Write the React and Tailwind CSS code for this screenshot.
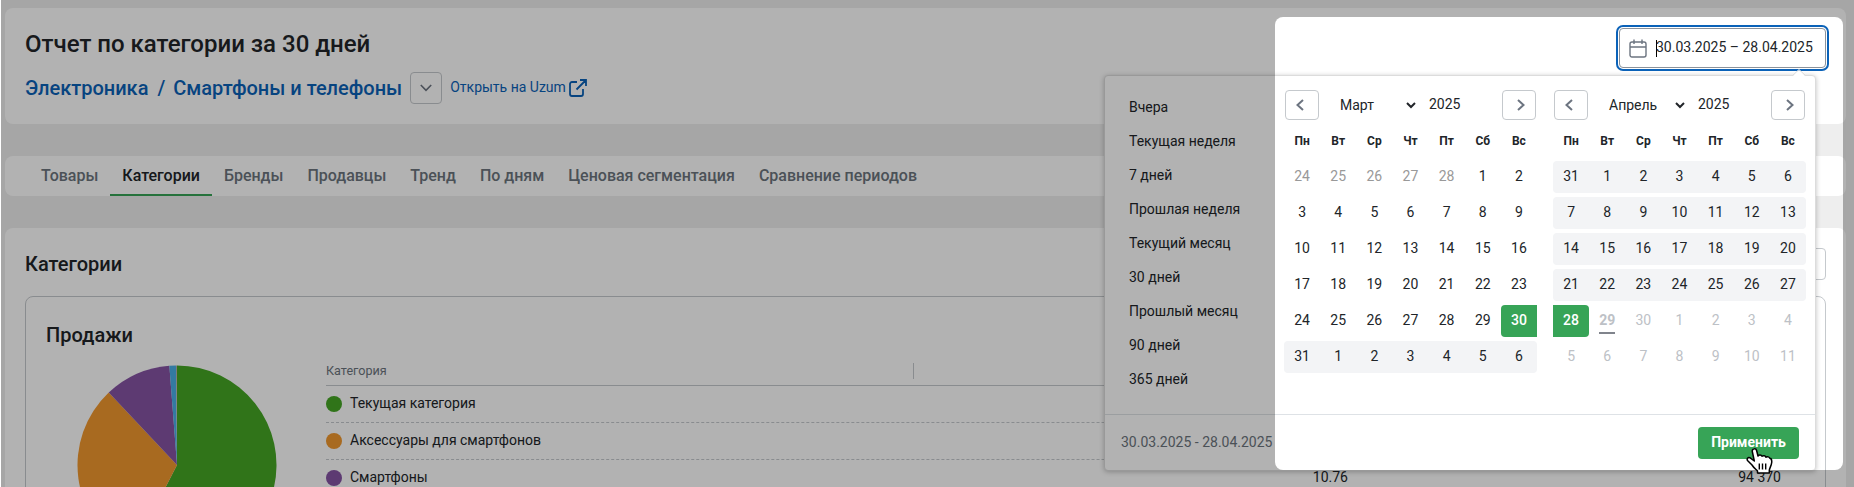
const tabs = [
  'Товары',
  'Категории',
  'Бренды',
  'Продавцы',
  'Тренд',
  'По дням',
  'Ценовая сегментация',
  'Сравнение периодов',
];

const presets = [
  'Вчера',
  'Текущая неделя',
  '7 дней',
  'Прошлая неделя',
  'Текущий месяц',
  '30 дней',
  'Прошлый месяц',
  '90 дней',
  '365 дней',
];

const weekdays = ['Пн', 'Вт', 'Ср', 'Чт', 'Пт', 'Сб', 'Вс'];

// state: '' - regular, out - other month, start / end of selection, today, off - disabled
const march = [
  { days: [24, 25, 26, 27, 28, 1, 2], states: ['out', 'out', 'out', 'out', 'out', '', ''] },
  { days: [3, 4, 5, 6, 7, 8, 9], states: [] },
  { days: [10, 11, 12, 13, 14, 15, 16], states: [] },
  { days: [17, 18, 19, 20, 21, 22, 23], states: [] },
  { days: [24, 25, 26, 27, 28, 29, 30], states: ['', '', '', '', '', '', 'start'] },
  { days: [31, 1, 2, 3, 4, 5, 6], states: [], range: true },
];

const april = [
  { days: [31, 1, 2, 3, 4, 5, 6], states: [], range: true },
  { days: [7, 8, 9, 10, 11, 12, 13], states: [], range: true },
  { days: [14, 15, 16, 17, 18, 19, 20], states: [], range: true },
  { days: [21, 22, 23, 24, 25, 26, 27], states: [], range: true },
  { days: [28, 29, 30, 1, 2, 3, 4], states: ['end', 'today', 'off', 'off', 'off', 'off', 'off'] },
  { days: [5, 6, 7, 8, 9, 10, 11], states: ['off', 'off', 'off', 'off', 'off', 'off', 'off'] },
];

const dayClass = {
  out: 'text-[#999]',
  off: 'text-[#bdc1c6]',
  today: 'text-[#bdc1c6] font-bold',
  start: 'bg-[#37a457] text-white font-medium rounded-l',
  end: 'bg-[#37a457] text-white font-medium rounded-r',
};

const rows = [
  { name: 'Текущая категория', dot: 'bg-[#45a625]' },
  { name: 'Аксессуары для смартфонов', dot: 'bg-[#f1982e]' },
  { name: 'Смартфоны', dot: 'bg-[#8653a4]', share: '10.76', sales: '94 370' },
];

const slices = [
  { from: 0, to: 207.2, color: '#45a625' },
  { from: 207.2, to: 316.7, color: '#f1982e' },
  { from: 316.7, to: 355.6, color: '#8653a4' },
  { from: 355.6, to: 359.4, color: '#49afe8' },
  { from: 359.4, to: 360, color: '#b0b0b0' },
];

const slicePath = (from, to) => {
  const point = (deg) => {
    const a = (deg * Math.PI) / 180;
    return `${100 + 99.5 * Math.sin(a)} ${100 - 99.5 * Math.cos(a)}`;
  };
  return `M100 100L${point(from)}A99.5 99.5 0 ${to - from > 180 ? 1 : 0} 1 ${point(to)}Z`;
};

const Pie = () => (
  <svg className="ml-[31px] h-[200px] w-[200px]" viewBox="0 0 200 200">
    {slices.map((s) => (
      <path key={s.from} d={slicePath(s.from, s.to)} fill={s.color} />
    ))}
  </svg>
);

const NavButton = ({ next }) => (
  <button
    className={`flex h-[30px] w-[34px] items-center justify-center rounded border border-[#c5c9cd] bg-white ${
      next ? 'pl-1' : 'pr-1'
    }`}
  >
    <svg width="8" height="12" viewBox="0 0 8 12" fill="none" stroke="#6c7480" strokeWidth="2">
      <path d={next ? 'M1 1l5.5 5L1 11' : 'M7 1L1.5 6 7 11'} />
    </svg>
  </button>
);

const Day = ({ day, state }) => (
  <div className={`flex h-8 flex-1 items-center justify-center pb-0.5 ${dayClass[state] || ''}`}>
    {state === 'today' ? (
      <span className="relative">
        {day}
        <i className="absolute inset-x-0 -bottom-[3px] h-0.5 bg-[#80848c]" />
      </span>
    ) : (
      day
    )}
  </div>
);

const Calendar = ({ month, weeks }) => (
  <div className="w-[253px]">
    <div className="flex h-[30px] items-center px-px text-[14px]">
      <NavButton />
      <div className="ml-[21px] flex w-[76px] items-center justify-between">
        <span>{month}</span>
        <svg width="10" height="7" viewBox="0 0 10 7" fill="none" stroke="#212529" strokeWidth="2">
          <path d="M1 1l4 4 4-4" />
        </svg>
      </div>
      <span className="mr-auto ml-[13px] pb-0.5">2025</span>
      <NavButton next />
    </div>
    <div className="mt-[9px] flex h-6 items-center text-[12px] font-bold">
      {weekdays.map((d) => (
        <div key={d} className="flex-1 text-center">{d}</div>
      ))}
    </div>
    <div className="mt-2 flex flex-col gap-1 text-[14px]">
      {weeks.map((week, i) => (
        <div key={i} className={`flex rounded ${week.range ? 'bg-[#f3f4f6]' : ''}`}>
          {week.days.map((day, j) => (
            <Day key={j} day={day} state={week.states[j]} />
          ))}
        </div>
      ))}
    </div>
  </div>
);

const DatePopup = () => (
  <div className="absolute top-[47px] right-[10px] z-10 flex h-[396px] w-[712px] flex-col rounded border border-[#dcdcdc] bg-white shadow-[0_1px_5px_rgba(0,0,0,0.25)]">
    <svg className="absolute -top-[7px] right-[9px]" width="14" height="8" viewBox="0 0 14 8">
      <path d="M0 8L7 1l7 7z" fill="#fff" />
      <path d="M0 7L7 0.5 14 7" fill="none" stroke="#dcdcdc" />
    </svg>
    <div className="flex h-[338px]">
      <ul className="w-[179px] pt-[14px] pl-6 text-[14px]">
        {presets.map((p) => (
          <li key={p} className="flex h-[34px] items-center">{p}</li>
        ))}
      </ul>
      <div className="flex gap-4 pt-[14px]">
        <Calendar month="Март" weeks={march} />
        <Calendar month="Апрель" weeks={april} />
      </div>
    </div>
    <div className="flex flex-1 items-center justify-between border-t border-[#dee2e6] px-4">
      <span className="text-[14px] text-[#6c757d]">30.03.2025 - 28.04.2025</span>
      <button className="h-8 w-[101px] rounded bg-[#37a457] text-[14px] font-bold text-white">
        Применить
      </button>
    </div>
  </div>
);

const DateInput = () => (
  <div className="relative h-10 w-[207px]">
    <div className="flex h-10 items-center rounded border border-[#8b929b] bg-white pl-[9px] ring-2 ring-[#0b62b8] ring-offset-1">
      <svg width="18" height="19" viewBox="0 0 18 19" fill="none" stroke="#6c7480" strokeWidth="1.4">
        <rect x="1" y="3" width="16" height="15" rx="2" />
        <path d="M1 8h16M5 0.5v4.5M13 0.5v4.5" />
      </svg>
      <span className="-mr-px ml-[9px] h-[17px] w-px bg-black" />
      <span className="pb-px text-[14px]">30.03.2025 – 28.04.2025</span>
    </div>
    <DatePopup />
  </div>
);

const Header = () => (
  <div className="flex h-[116px] justify-between rounded-lg bg-white px-5 pt-5">
    <div>
      <h1 className="text-[24px] leading-8 font-medium">Отчет по категории за 30 дней</h1>
      <div className="mt-3 flex h-8 items-center text-[#0b62b8]">
        <span className="text-[20px] font-medium">Электроника</span>
        <span className="mr-2 ml-[9px] text-[20px] font-medium">/</span>
        <span className="text-[20px] font-medium">Смартфоны и телефоны</span>
        <button className="ml-2 flex h-8 w-8 items-center justify-center rounded border border-[#c5c9cd]">
          <svg width="12" height="8" viewBox="0 0 12 8" fill="none" stroke="#6c7480" strokeWidth="1.6">
            <path d="M0.8 1L6 6.3 11.2 1" />
          </svg>
        </button>
        <span className="ml-2 pb-0.5 text-[14px]">Открыть на Uzum</span>
        <svg className="ml-[3px]" width="18" height="18" viewBox="0 0 18 18" fill="none" stroke="#0b62b8" strokeWidth="1.8">
          <path d="M8 3H3a2 2 0 0 0-2 2v10a2 2 0 0 0 2 2h9a2 2 0 0 0 2-2v-5M11 1h6v6M17 1L7.5 10.5" />
        </svg>
      </div>
    </div>
    <DateInput />
  </div>
);

const Tabs = () => (
  <nav className="mt-8 flex h-10 rounded-lg bg-white pl-6 text-[16px] font-medium text-[#6c757d]">
    {tabs.map((tab) => (
      <a
        key={tab}
        className={`flex items-center border-b-2 px-3 pt-0.5 ${
          tab === 'Категории' ? 'border-[#37a457] text-[#212529]' : 'border-transparent'
        }`}
      >
        {tab}
      </a>
    ))}
  </nav>
);

const Sales = () => (
  <div className="mt-4 h-[320px] rounded-lg border border-[#c5c9cd] px-5 pt-[23px]">
    <h3 className="text-[20px] leading-[30px] font-medium">Продажи</h3>
    <div className="mt-[15px] flex">
      <Pie />
      <div className="mt-[-9px] ml-[49px] flex-1">
        <div className="flex h-[30px] border-b border-[#c5c9cd] text-[12.6px] text-[#6c757d]">
          <div className="flex h-[30px] w-[588px] items-center">
            <span className="flex-1">Категория</span>
            <span className="h-4 w-px bg-[#c5c9cd]" />
          </div>
        </div>
        {rows.map((row) => (
          <div key={row.name} className="flex h-[37px] items-center border-b border-dashed border-[#c5c9cd] text-[14px]">
            <span className={`h-4 w-4 rounded-full ${row.dot}`} />
            <span className="ml-2 w-[565px] pb-px">{row.name}</span>
            <span className="w-[433px] pb-px text-right">{row.share}</span>
            <span className="w-[433px] pb-px text-right">{row.sales}</span>
          </div>
        ))}
      </div>
    </div>
  </div>
);

// White hole over the date picker, everything around it is dimmed
const Spotlight = () => (
  <div className="pointer-events-none absolute top-[17px] left-[1274px] z-20 h-[453px] w-[568px] rounded-lg shadow-[0_0_0_2000px_rgba(0,0,0,0.3)]" />
);

const Cursor = () => (
  <svg className="absolute top-[448px] left-[1745px] z-30" width="27" height="27" viewBox="0 0 27 27">
    <path
      d="M8.300 .8C9.500 .6 10.300 1.300 10.600 2.500L12 8C13 6.500 15.300 6.700 16 8.300C17.200 7.200 19.500 7.600 20 9.200C21.300 8.300 23.300 8.900 23.800 10.300C25.800 10.500 25.900 12.500 25.700 14.500C25.500 17.500 23.500 20 23.300 22.500V25H11.500V23C9.500 21 7.500 19.500 6 17L1.500 12.500C.5 10.800 2 9 3.800 9.700L8.300 13L6.300 3.500C6 2.200 6.900 1 8.300 .8Z"
      fill="#fff"
      stroke="#000"
      strokeWidth="1.5"
      strokeLinejoin="round"
    />
    <path d="M13.300 15.500v6M16.500 15.500v6M19.700 15.500v6" stroke="#000" strokeWidth="1.4" />
  </svg>
);

export default function App() {
  return (
    <div className="h-[487px] w-[1854px] bg-white pl-px font-['Roboto',sans-serif] text-[#212529]">
      <div className="relative h-full overflow-hidden bg-[#eee] pt-2 pr-2 pl-1">
        <Header />
        <Tabs />
        <div className="mt-8 rounded-lg bg-white px-5 pt-5">
          <div className="flex h-8 items-center justify-between">
            <h2 className="text-[20px] font-medium">Категории</h2>
            <div className="h-8 w-24 rounded border border-[#c5c9cd]" />
          </div>
          <Sales />
        </div>
        <Spotlight />
        <Cursor />
      </div>
    </div>
  );
}
